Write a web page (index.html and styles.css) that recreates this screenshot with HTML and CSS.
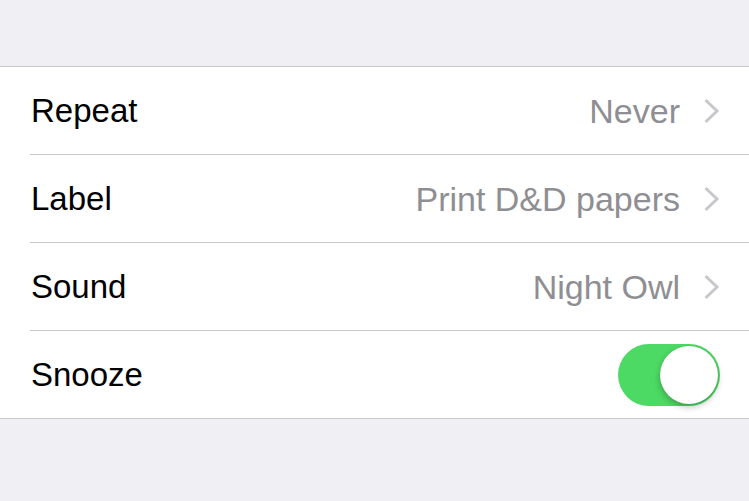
FILE: index.html
```html
<!DOCTYPE html>
<html>
<head>
  <meta charset="UTF-8">
  <title>Alarm</title>
  <link rel="stylesheet" href="styles.css">
</head>
<body>

  <div class="top-space"></div>

  <div class="settings-list">
    <div class="row">
      <span class="row-label">Repeat</span>
      <span class="row-value">Never</span>
      <svg class="chevron" viewBox="0 0 17 26"><path d="M2.5 2 L14 13 L2.5 24" /></svg>
    </div>
    <div class="row">
      <span class="row-label">Label</span>
      <span class="row-value">Print D&amp;D papers</span>
      <svg class="chevron" viewBox="0 0 17 26"><path d="M2.5 2 L14 13 L2.5 24" /></svg>
    </div>
    <div class="row">
      <span class="row-label">Sound</span>
      <span class="row-value">Night Owl</span>
      <svg class="chevron" viewBox="0 0 17 26"><path d="M2.5 2 L14 13 L2.5 24" /></svg>
    </div>
    <div class="row last">
      <span class="row-label">Snooze</span>
      <div class="toggle on"><div class="knob"></div></div>
    </div>
  </div>

</body>
</html>
```

FILE: styles.css
```css
:root {
  --group-bg: #efeff4;
  --separator: #c8c7cc;
  --value-color: #8e8e93;
  --chevron-color: #c7c7cc;
  --switch-green: #4cd964;
}
body {
  margin: 0;
  background-color: var(--group-bg);
  font-family: "Liberation Sans", Arial, sans-serif;
  color: #000;
}
.top-space {
  height: 66px;
}
.settings-list {
  background-color: #fff;
  border-top: 1px solid var(--separator);
  border-bottom: 1px solid var(--separator);
  padding-left: 30px;
}
.row {
  display: flex;
  align-items: center;
  height: 88px;
  box-sizing: border-box;
  padding-right: 29px;
  padding-top: 1px;
  border-bottom: 1px solid var(--separator);
}
.row.last {
  border-bottom: none;
  height: 87px;
}
.row-label {
  flex: 1;
  font-size: 33px;
  padding-left: 1px;
}
.row-value {
  font-size: 34px;
  color: var(--value-color);
  margin-right: 23px;
}
.chevron {
  width: 17px;
  height: 26px;
  fill: none;
  stroke: var(--chevron-color);
  stroke-width: 3px;
}
.toggle {
  width: 102px;
  height: 62px;
  border-radius: 31px;
  background-color: var(--switch-green);
  display: flex;
  align-items: center;
  justify-content: flex-end;
  padding: 0 2px;
  box-sizing: border-box;
}
.knob {
  width: 58px;
  height: 58px;
  border-radius: 50%;
  background-color: #fff;
  box-shadow: 0 3px 6px rgba(0, 0, 0, 0.25), 0 0 1px rgba(0, 0, 0, 0.15);
}
```
